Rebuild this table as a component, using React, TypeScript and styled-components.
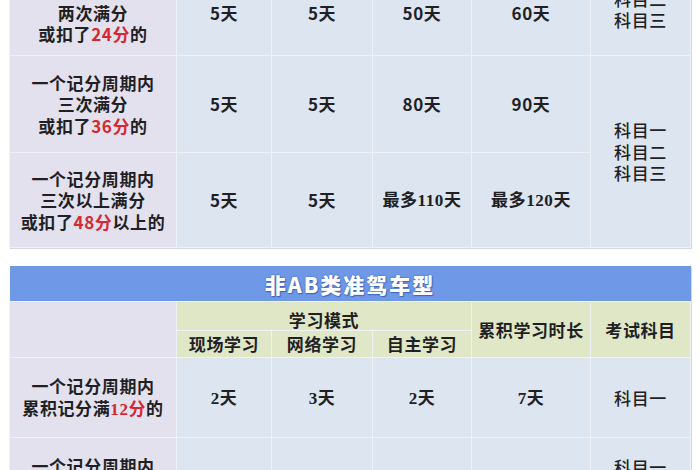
import React from "react";
import styled, { createGlobalStyle } from "styled-components";

const GlobalStyle = createGlobalStyle`
  html, body {
    margin: 0;
    padding: 0;
    background: #ffffff;
    height: 470px;
    overflow: hidden;
  }
  body {
    font-family: "Noto Sans CJK SC", "Noto Sans", sans-serif;
    color: #1f1f24;
  }
`;

const Page = styled.div`
  padding-left: 9px;
  margin-top: -31px;
  width: 681px;
  display: flex;
  flex-direction: column;
  gap: 18px;
`;

const Sheet = styled.table`
  width: 681px;
  table-layout: fixed;
  border-collapse: collapse;
  box-shadow: 1px 1px 0 #d3d7df;
`;

const Row = styled.tr<{ h: number }>`
  height: ${(p) => p.h}px;
`;

const Cell = styled.td`
  border: 1px solid #eef1f6;
  text-align: center;
  vertical-align: middle;
  padding: 0;
  font-size: 17px;
  line-height: 21.5px;
  letter-spacing: 0.6px;
`;

const LabelCell = styled(Cell)`
  background: #e3e1ee;
  font-weight: 700;
`;

const DataCell = styled(Cell)`
  background: #dce5f0;
  font-weight: 700;
`;

const SubjectCell = styled(DataCell)`
  font-weight: 500;
`;

/* the subject list of the first row is merged with the row above the view */
const Shifted = styled.div<{ dy: number }>`
  transform: translateY(${(p) => p.dy}px);
`;

const HeadCell = styled(Cell)<{ bottom?: boolean }>`
  background: #dfe7c6;
  font-weight: 700;
  vertical-align: ${(p) => (p.bottom ? "bottom" : "middle")};
`;

const BlankHead = styled(Cell)`
  background: #e3e1ee;
`;

const TitleCell = styled.td`
  background: #6f98e7;
  height: 35px;
  padding: 0;
  text-align: center;
  vertical-align: middle;
  color: #ffffff;
  font-size: 21px;
  font-weight: 900;
  letter-spacing: 2px;
  text-shadow: 0 0 2px #3d64b8, 1px 1px 1px #3d64b8;
  border-bottom: 1px solid #eef1f6;
`;

const Hot = styled.span`
  color: #d7282f;
`;

const Num = styled.span`
  font-family: "Liberation Serif", "DejaVu Serif", serif;
  font-weight: 700;
`;

const Cols = () => (
  <colgroup>
    <col style={{ width: 167 }} />
    <col style={{ width: 95 }} />
    <col style={{ width: 101 }} />
    <col style={{ width: 99 }} />
    <col style={{ width: 119 }} />
    <col style={{ width: 100 }} />
  </colgroup>
);

export default function App() {
  return (
    <>
      <GlobalStyle />
      <Page>
        <Sheet>
          <Cols />
          <tbody>
            <Row h={86}>
              <LabelCell>
                一个记分周期内
                <br />
                两次满分
                <br />
                或扣了<Hot>24分</Hot>的
              </LabelCell>
              <DataCell>5天</DataCell>
              <DataCell>5天</DataCell>
              <DataCell>50天</DataCell>
              <DataCell>60天</DataCell>
              <SubjectCell>
                <Shifted dy={-14}>
                  科目一
                  <br />
                  科目二
                  <br />
                  科目三
                </Shifted>
              </SubjectCell>
            </Row>
            <Row h={97}>
              <LabelCell>
                一个记分周期内
                <br />
                三次满分
                <br />
                或扣了<Hot>36分</Hot>的
              </LabelCell>
              <DataCell>5天</DataCell>
              <DataCell>5天</DataCell>
              <DataCell>80天</DataCell>
              <DataCell>90天</DataCell>
              <SubjectCell rowSpan={2}>
                科目一
                <br />
                科目二
                <br />
                科目三
              </SubjectCell>
            </Row>
            <Row h={95}>
              <LabelCell>
                一个记分周期内
                <br />
                三次以上满分
                <br />
                或扣了<Hot>48分</Hot>以上的
              </LabelCell>
              <DataCell>5天</DataCell>
              <DataCell>5天</DataCell>
              <DataCell>
                最多<Num>110</Num>天
              </DataCell>
              <DataCell>
                最多<Num>120</Num>天
              </DataCell>
            </Row>
          </tbody>
        </Sheet>

        <Sheet>
          <Cols />
          <tbody>
            <tr>
              <TitleCell colSpan={6}>非AB类准驾车型</TitleCell>
            </tr>
            <Row h={29}>
              <BlankHead rowSpan={2} />
              <HeadCell colSpan={3} bottom>
                学习模式
              </HeadCell>
              <HeadCell rowSpan={2}>累积学习时长</HeadCell>
              <HeadCell rowSpan={2}>考试科目</HeadCell>
            </Row>
            <Row h={27}>
              <HeadCell>现场学习</HeadCell>
              <HeadCell>网络学习</HeadCell>
              <HeadCell>自主学习</HeadCell>
            </Row>
            <Row h={80}>
              <LabelCell>
                一个记分周期内
                <br />
                累积记分满<Hot><Num>12</Num>分</Hot>的
              </LabelCell>
              <DataCell>
                <Num>2</Num>天
              </DataCell>
              <DataCell>
                <Num>3</Num>天
              </DataCell>
              <DataCell>
                <Num>2</Num>天
              </DataCell>
              <DataCell>
                <Num>7</Num>天
              </DataCell>
              <SubjectCell>科目一</SubjectCell>
            </Row>
            <Row h={80}>
              <LabelCell>
                一个记分周期内
                <br />
                累积记分满<Hot><Num>24</Num>分</Hot>的
              </LabelCell>
              <DataCell>
                <Num>3</Num>天
              </DataCell>
              <DataCell>
                <Num>5</Num>天
              </DataCell>
              <DataCell>
                <Num>3</Num>天
              </DataCell>
              <DataCell>
                <Num>11</Num>天
              </DataCell>
              <SubjectCell>
                科目一
                <br />
                科目三
              </SubjectCell>
            </Row>
          </tbody>
        </Sheet>
      </Page>
    </>
  );
}
